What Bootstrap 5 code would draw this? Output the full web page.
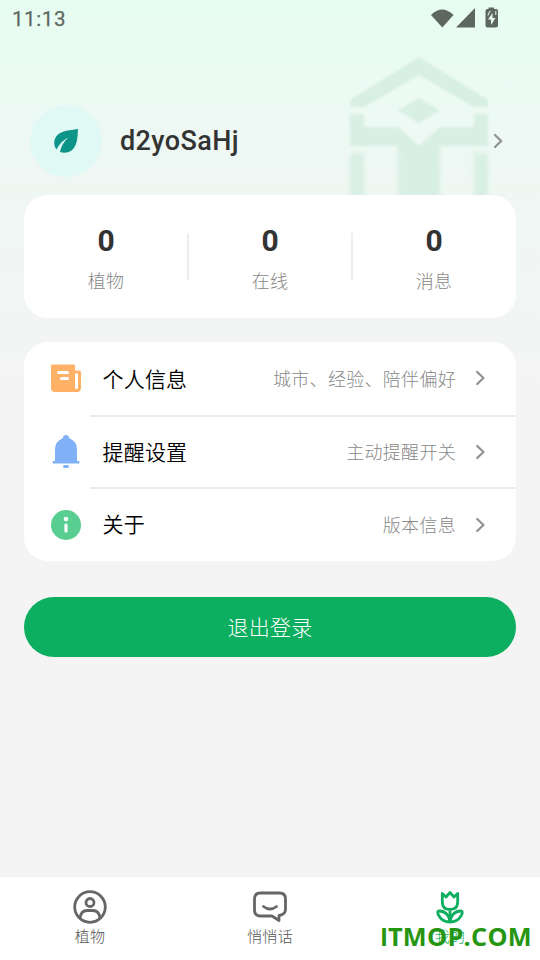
<!DOCTYPE html>
<html lang="zh-CN">
<head>
<meta charset="utf-8">
<meta name="viewport" content="width=device-width, initial-scale=1">
<title>我的</title>
<link href="https://cdn.jsdelivr.net/npm/bootstrap@5.3.0/dist/css/bootstrap.min.css" rel="stylesheet">
<style>
body{font-family:Roboto,"Noto Sans CJK SC",sans-serif;background:#f4f4f4;color:#000}
.screen{height:960px;overflow:hidden;background:linear-gradient(180deg,#e7fdf1 0,#eafbf3 60px,#edf9f4 120px,#eff7f3 190px,#f1f6f5 260px,#f4f4f4 385px)}
.statusbar{height:36px;padding:2px 41px 0 12px;color:#5d665f;font-size:20.5px;font-weight:400;letter-spacing:.6px;-webkit-text-stroke:.25px #5d665f}
.statusbar svg{margin-bottom:3px}
.profile{height:159px;padding:69px 36px 18px 30px}
.avatar{width:72px;height:72px;background:#e0f9f4}
.user-name{font-size:27px;font-weight:500;color:#333;margin-left:18px;letter-spacing:.4px;line-height:32px}
.emblem{left:330px;top:40px}
.panel{border-radius:24px;margin:0 24px}
.stats{height:123px}
.stat{padding-top:28px}
.stat + .stat::before{content:"";position:absolute;left:-1px;top:38px;width:2px;height:47px;background:#ededed}
.stat-num{font-size:30px;font-weight:700;line-height:36px;color:#333}
.stat-label,.hint{font-size:18px;font-weight:300;font-family:"Noto Sans CJK SC",sans-serif;color:#888;letter-spacing:.3px}
.stat-label{line-height:26px;margin-top:8px}
.menu{height:219px;margin-top:24px}
.menu-row{padding:0 30px 0 27px}
.menu-row:first-child > svg{margin-bottom:1px}
.menu-row + .menu-row::before{content:"";position:absolute;top:-1px;left:66px;right:0;height:2px;background:#ebebeb}
.menu-title{font-size:21px;font-weight:350;font-family:"Noto Sans CJK SC",sans-serif;letter-spacing:.2px;margin-left:21.500px;padding-bottom:1px}
.hint{margin-right:18px;padding-bottom:1px}
.logout{width:492px;height:60px;margin:36px 24px 0;padding:5px 0 7px;background:#0cae5f;font:300 21px/31px "Noto Sans CJK SC",sans-serif;letter-spacing:.3px}
.logout:hover{background:#0a9c55}
.tabs{height:84px;border-top:1px solid #f0f0f0}
.tab{padding-top:12px;font:300 15px/22px "Noto Sans CJK SC",sans-serif;color:#555;letter-spacing:.3px}
.tab svg{display:block}
.tab.current{color:#0cae5f}
.watermark{right:8px;bottom:5px;font:700 25.300px/36px "Open Sans",sans-serif;color:#269511;letter-spacing:.28px;white-space:nowrap}
.watermark::first-letter{font-family:"Liberation Sans",sans-serif}
</style>
</head>
<body>
<main class="screen position-relative d-flex flex-column">
  <svg class="emblem position-absolute" width="210" height="170" viewBox="0 0 210 170" aria-hidden="true">
    <defs>
      <filter id="soft" x="-20%" y="-20%" width="140%" height="140%"><feGaussianBlur stdDeviation="2.8"/></filter>
      <filter id="edge" x="-10%" y="-10%" width="120%" height="120%"><feGaussianBlur stdDeviation="1"/></filter>
      <filter id="mid" x="-10%" y="-10%" width="120%" height="120%"><feGaussianBlur stdDeviation="1.8"/></filter>
    </defs>
    <g fill="#d8efe4">
      <path filter="url(#edge)" d="M89 17L158 60V67H144L89 35 34 67H20V60Z"/>
      <path filter="url(#edge)" d="M89 58L110 70.500 89 83 68 70.500Z"/>
      <path filter="url(#mid)" d="M20 74H34V87H68L89 106 110 87H144V74H158V106H110V112H68V106H20Z"/>
      <g filter="url(#soft)">
        <path d="M68 108H110V190H68Z"/>
        <path d="M20 113H34V190H20ZM144 113H158V190H144Z"/>
      </g>
    </g>
  </svg>

  <header class="statusbar d-flex align-items-center justify-content-between flex-shrink-0">
    <span>11:13</span>
    <svg width="70" height="24" viewBox="0 0 70 24" fill="#5d665f">
      <path d="M2 9Q13-2 24.500 9L13.300 21.500Z"/>
      <path d="M46 2V21.500H27Z"/>
      <path fill-rule="evenodd" d="M59.500 1.500H65V3H67Q69 3 69 5V19.500Q69 21.500 67 21.500H58.500Q56.500 21.500 56.500 19.500V5Q56.500 3 58.500 3H59.500ZM63.500 7L59 13.500H62V19L66.500 12H63.500Z"/>
      <path d="M59 9.500L60.500 5.500H61.500M66.800 5V9" fill="none" stroke="#e9fcf2"/>
    </svg>
  </header>

  <section class="profile d-flex align-items-center flex-shrink-0 position-relative">
    <div class="avatar rounded-circle d-flex align-items-center justify-content-center">
      <svg width="26" height="26" viewBox="0 0 26 26" fill="#0d9488"><path d="M25 1C20 2 10 2 5 6.500C.500 10.500 0 17 3.500 21.500C6 16 10 12.500 15.500 9.500C11 13.500 8 18 7 24C11 25.500 17 25 20.500 20.500C24.500 15.500 24.500 9 25 1Z"/></svg>
    </div>
    <span class="user-name">d2yoSaHj</span>
    <svg class="ms-auto" width="12" height="18" viewBox="0 0 12 18" fill="none" stroke="#929292" stroke-width="2.300" stroke-linecap="round" stroke-linejoin="round"><path d="M3 3L9.200 9 3 15"/></svg>
  </section>

  <section class="panel stats bg-white position-relative d-flex text-center flex-shrink-0">
    <div class="stat col-4 position-relative"><div class="stat-num">0</div><div class="stat-label">植物</div></div>
    <div class="stat col-4 position-relative"><div class="stat-num">0</div><div class="stat-label">在线</div></div>
    <div class="stat col-4 position-relative"><div class="stat-num">0</div><div class="stat-label">消息</div></div>
  </section>

  <section class="panel menu bg-white d-flex flex-column flex-shrink-0">
    <div class="menu-row d-flex flex-fill align-items-center position-relative">
      <svg width="30" height="36" viewBox="0 0 30 36"><path fill="#ffb168" d="M1 4.500H23Q24 4.500 24 5.500V10.500H28Q30 10.500 30 12.500V28Q30 32 26 32H4Q0 32 0 28V5.500Q0 4.500 1 4.500Z"/><path d="M7.500 12.500H16.500M10.500 18.500H16.500M25.500 14.500V27.500" stroke="#fff" stroke-width="3" stroke-linecap="round"/></svg>
      <span class="menu-title">个人信息</span><span class="hint ms-auto">城市、经验、陪伴偏好</span>
      <svg width="12" height="18" viewBox="0 0 12 18" fill="none" stroke="#929292" stroke-width="2.300" stroke-linecap="round" stroke-linejoin="round"><path d="M3.200 3L9.500 9 3.200 15"/></svg>
    </div>
    <div class="menu-row d-flex flex-fill align-items-center position-relative">
      <svg width="30" height="36" viewBox="0 0 30 36" fill="#80b1f6"><path d="M15 1Q18 1 18 4Q26 7 26 16V27H27.500Q28.500 27 28.500 28.200Q28.500 29.500 27.500 29.500H2.500Q1.500 29.500 1.500 28.200Q1.500 27 2.500 27H4V16Q4 7 12 4Q12 1 15 1Z"/><rect x="12" y="31" width="6" height="3" rx="1.500"/></svg>
      <span class="menu-title">提醒设置</span><span class="hint ms-auto">主动提醒开关</span>
      <svg width="12" height="18" viewBox="0 0 12 18" fill="none" stroke="#929292" stroke-width="2.300" stroke-linecap="round" stroke-linejoin="round"><path d="M3.200 3L9.500 9 3.200 15"/></svg>
    </div>
    <div class="menu-row d-flex flex-fill align-items-center position-relative">
      <svg width="30" height="36" viewBox="0 0 30 36"><circle cx="15" cy="18" r="15" fill="#59ce91"/><circle cx="15" cy="12" r="2.300" fill="#fff"/><path d="M15 18V24" stroke="#fff" stroke-width="3.200" stroke-linecap="round"/></svg>
      <span class="menu-title">关于</span><span class="hint ms-auto">版本信息</span>
      <svg width="12" height="18" viewBox="0 0 12 18" fill="none" stroke="#929292" stroke-width="2.300" stroke-linecap="round" stroke-linejoin="round"><path d="M3.200 3L9.500 9 3.200 15"/></svg>
    </div>
  </section>

  <button type="button" class="logout btn rounded-pill border-0 text-white flex-shrink-0">退出登录</button>

  <nav class="tabs bg-white d-flex mt-auto">
    <div class="tab col-4 d-flex flex-column align-items-center">
      <svg width="36" height="36" viewBox="0 0 36 36" fill="none" stroke="#666" stroke-width="2.800"><circle cx="18" cy="18" r="15.300"/><circle cx="18" cy="13.500" r="4"/><path d="M8 29Q9 21.500 15 21.500H21Q27 21.500 28 29"/></svg>
      植物
    </div>
    <div class="tab col-4 d-flex flex-column align-items-center">
      <svg width="36" height="36" viewBox="0 0 36 36" fill="none" stroke="#666" stroke-width="2.800" stroke-linejoin="round" stroke-linecap="round"><path d="M8.500 4H27.500Q33.500 4 33.500 10V20.500Q33.500 25.500 27 26.500V31.500L20 27H8.500Q2.500 27 2.500 21V10Q2.500 4 8.500 4Z"/><path d="M11.500 17.500Q18 22.500 24.500 17.500"/></svg>
      悄悄话
    </div>
    <div class="tab current col-4 d-flex flex-column align-items-center">
      <svg width="36" height="36" viewBox="0 0 36 36" fill="none" stroke="#0cae5f" stroke-width="2.800" stroke-linejoin="round"><path d="M10.300 4.500L14 8 18 3.500 22 8 25.700 4.500V13Q25.700 20.500 18 20.500Q10.300 20.500 10.300 13ZM18 20.500V27"/><path d="M18 33C17.500 26.500 13 22 7.500 22C5 22 5.500 24.500 7 27C9.500 31 13 33 18 33C23 33 26.500 31 29 27C30.500 24.500 31 22 28.500 22C23 22 18.500 26.500 18 33Z"/></svg>
      我的
    </div>
  </nav>
  <div class="watermark position-absolute">ITMOP.COM</div>
</main>
<script src="https://cdn.jsdelivr.net/npm/bootstrap@5.3.0/dist/js/bootstrap.bundle.min.js"></script>
</body>
</html>
